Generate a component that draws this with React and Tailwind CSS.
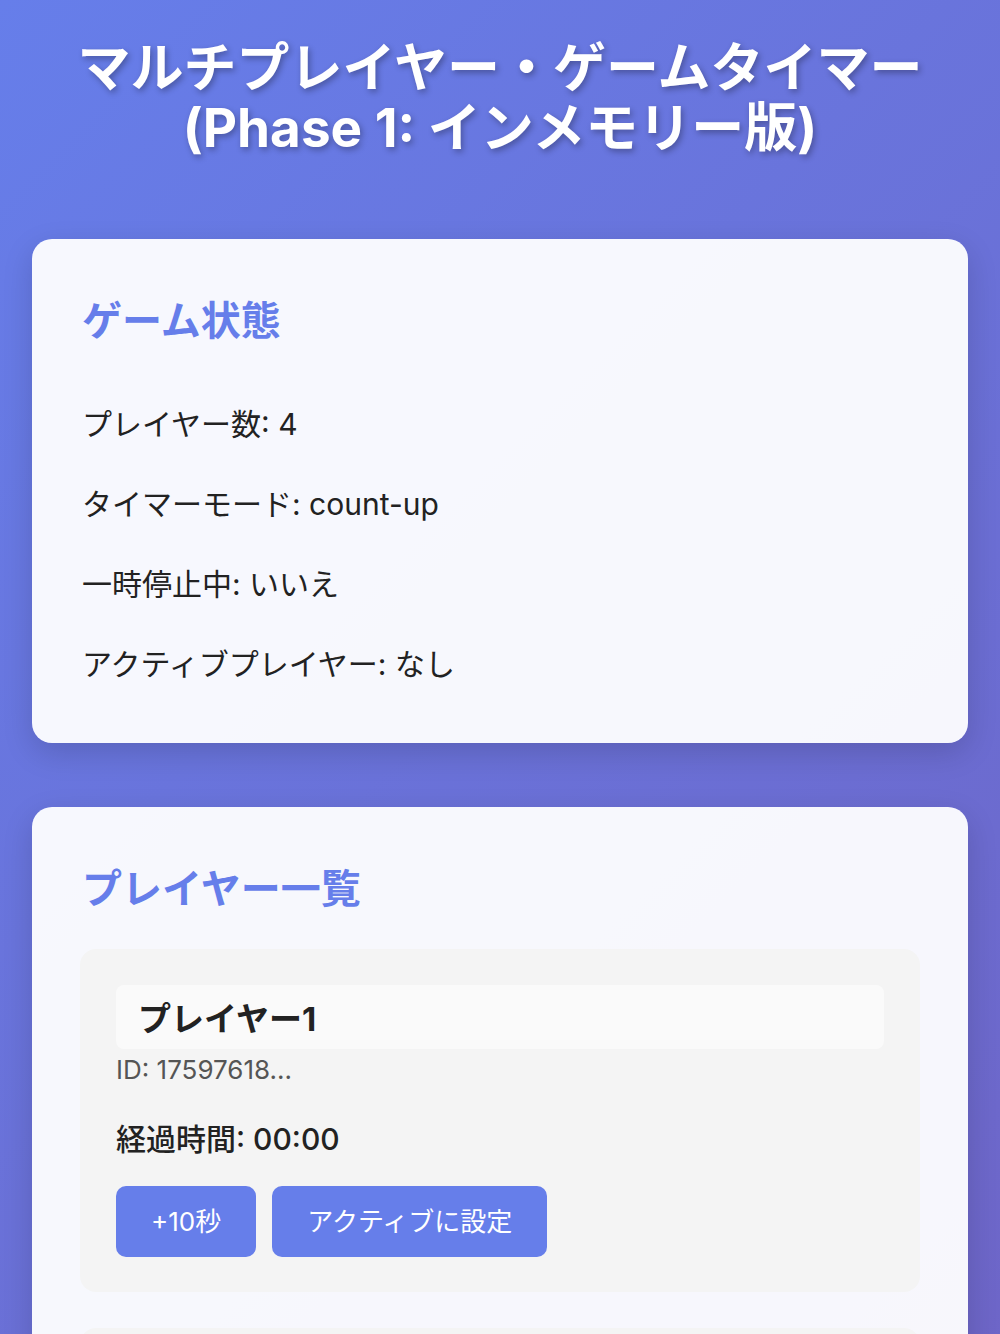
import React, { useState } from "react";

const players = [
  { id: "1759761800001", name: "プレイヤー1", time: "00:00" },
  { id: "1759761800002", name: "プレイヤー2", time: "00:00" },
  { id: "1759761800003", name: "プレイヤー3", time: "00:00" },
  { id: "1759761800004", name: "プレイヤー4", time: "00:00" },
];

const font = "font-['Inter','Noto_Sans_CJK_JP',sans-serif]";

const PlayerCard = ({ player }) => {
  const [name, setName] = useState(player.name);
  return (
    <div className="bg-[#f4f4f4] rounded-2xl px-[36px] pt-[36px] pb-[35px]">
      <input
        value={name}
        onChange={(e) => setName(e.target.value)}
        className="block w-full h-[64px] px-[22px] rounded-lg bg-[#fafafa] text-[33px] font-bold text-[#222] outline-none"
      />
      <div className="mt-[6px] text-[26px] leading-[30px] text-[#555]">
        ID: {player.id.slice(0, 8)}...
      </div>
      <div className="mt-[34px] text-[30px] leading-[40px] font-medium text-[#222]">
        経過時間: {player.time}
      </div>
      <div className="mt-[27px] flex gap-4">
        <button className="h-[71px] px-[35px] rounded-[10px] bg-[#667eea] text-white text-[26px]">
          +10秒
        </button>
        <button className="h-[71px] px-[35px] rounded-[10px] bg-[#667eea] text-white text-[26px]">
          アクティブに設定
        </button>
      </div>
    </div>
  );
};

const App = () => {
  return (
    <div className={`min-h-screen bg-[linear-gradient(135deg,#667eea_0%,#764ba2_138%)] px-8 pt-[38px] pb-16 ${font}`}>
      <h1 className="text-center text-white font-bold text-[53px] leading-[60px] [text-shadow:2px_3px_6px_rgba(0,0,0,0.3)]">
        マルチプレイヤー・ゲームタイマー
        <br />
        (Phase 1: インメモリー版)
      </h1>

      {/* Game state */}
      <div className="mt-[81px] bg-white/95 rounded-[20px] shadow-[0_10px_30px_rgba(0,0,0,0.15)] px-[50px] pt-[56px] pb-[55px]">
        <h2 className="text-[40px] leading-[52px] font-bold text-[#667eea] mb-[53px]">ゲーム状態</h2>
        <div className="flex flex-col gap-8 text-[30px] leading-[48px] text-[#222]">
          <p>プレイヤー数: 4</p>
          <p>タイマーモード: count-up</p>
          <p>一時停止中: いいえ</p>
          <p>アクティブプレイヤー: なし</p>
        </div>
      </div>

      {/* Players */}
      <div className="mt-16 bg-white/95 rounded-[20px] shadow-[0_10px_30px_rgba(0,0,0,0.15)] px-12 pt-[56px] pb-12">
        <h2 className="text-[40px] leading-[52px] font-bold text-[#667eea] mb-[34px] pl-[2px]">プレイヤー一覧</h2>
        <div className="flex flex-col gap-[36px]">
          {players.map((p) => (
            <PlayerCard key={p.id} player={p} />
          ))}
        </div>
      </div>
    </div>
  );
};

export default App;
